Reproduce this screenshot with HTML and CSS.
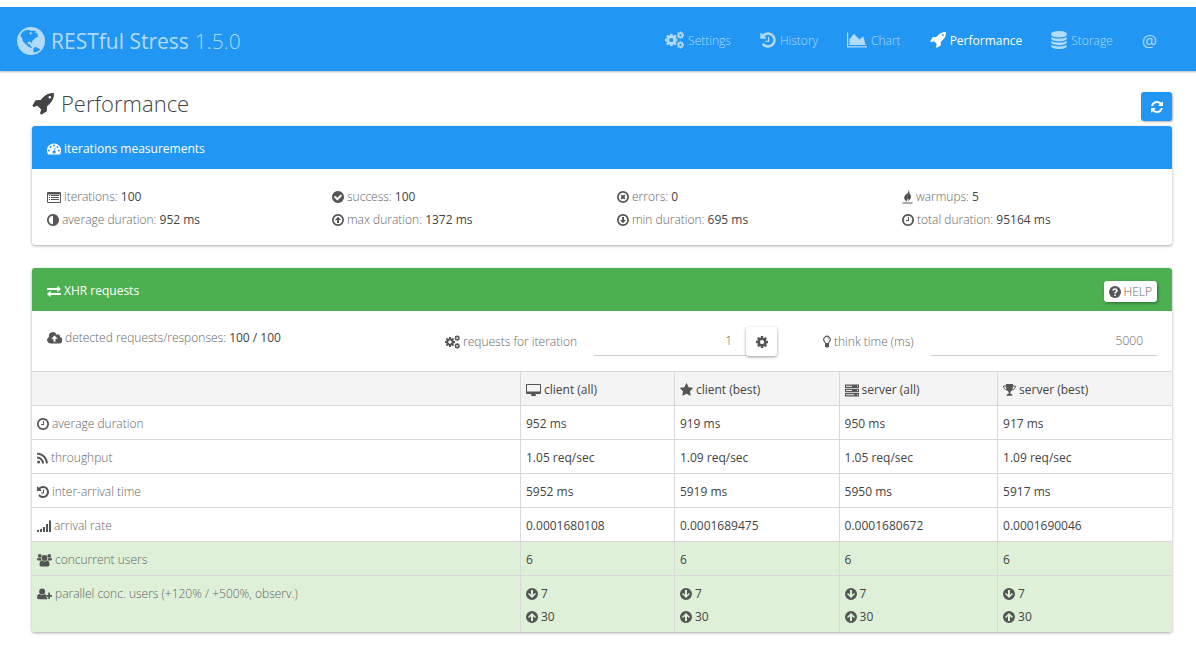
FILE: index.html
```html
<!DOCTYPE html>
<html lang="en">
<head>
<meta charset="utf-8">
<title>RESTful Stress - Performance</title>
<link rel="stylesheet" href="styles.css">
</head>
<body>
<svg class="sprite" aria-hidden="true">
  <symbol id="globe" viewBox="0 0 28 28"><path fill-rule="evenodd" d="M14 0a14 14 0 1 0 0 28a14 14 0 0 0 0-28zM6 4.500L9 3L12.500 3L14.500 4L17 3.500L19.500 4.500L18 5.500L21 7L20.500 8.500L21.500 10L19 10.500L17.500 12L15.500 13.500L15 16L12.500 14.500L10.500 15.500L11 17.500L13 17L13.500 19L15 20L14.500 21L12 20L9 17.500L6 14.500L5 11L3.500 9L4 7zM17 20.500L19 20L23.500 22.500L20.500 24.500L17 25.500L16 23zM12.500 5L14.500 5.500L15 7L13 7.500z"/></symbol>
  <symbol id="cog" viewBox="128 0 1536 1792"><path d="M1152 896q0-106-75-181t-181-75-181 75-75 181 75 181 181 75 181-75 75-181zm512-109v222q0 12-8 23t-20 13l-185 28q-19 54-39 91 35 50 107 138 10 12 10 25t-9 23q-27 37-99 108t-94 71q-12 0-26-9l-138-108q-44 23-91 38-16 136-29 186-7 28-36 28h-222q-14 0-24.5-8.5t-11.500-21.500l-28-184q-49-16-90-37l-141 107q-10 9-25 9-14 0-25-11-126-114-165-168-7-10-7-23 0-12 8-23 15-21 51-66.500t54-70.500q-27-50-41-99l-183-27q-13-2-21-12.500t-8-23.500v-222q0-12 8-23t19-13l186-28q14-46 39-92-40-57-107-138-10-12-10-24 0-10 9-23 26-36 98.500-107.500t94.500-71.500q13 0 26 10l138 107q44-23 91-38 16-136 29-186 7-28 36-28h222q14 0 24.500 8.500t11.500 21.500l28 184q49 16 90 37l142-107q9-9 24-9 13 0 25 10 129 119 165 170 7 8 7 22 0 12-8 23-15 21-51 66.500t-54 70.500q26 50 41 98l183 28q13 2 21 12.500t8 23.500z"/></symbol>
  <symbol id="cogs" viewBox="0 0 1920 1792"><use href="#cog" x="0" y="150" width="1280" height="1493"/><use href="#cog" x="1200" y="-20" width="720" height="840"/><use href="#cog" x="1200" y="970" width="720" height="840"/></symbol>
  <symbol id="history" viewBox="128 0 1536 1792"><path d="M1664 896q0 156-61 298t-164 245-245 164-298 61q-172 0-327-72.500t-264-204.500q-7-10-6.500-22.500t8.500-20.500l137-138q10-9 25-9 16 2 23 12 73 95 179 147t225 52q104 0 198.500-40.500t163.500-109.500 109.500-163.500 40.500-198.500-40.500-198.500-109.500-163.500-163.500-109.500-198.500-40.500q-98 0-188 35.500t-160 101.500l137 138q31 30 14 69-17 40-59 40h-448q-26 0-45-19t-19-45v-448q0-42 40-59 39-17 69 14l130 129q107-101 244.500-156.500t284.500-55.500q156 0 298 61t245 164 164 245 61 298zm-640-288v448q0 14-9 23t-23 9h-320q-14 0-23-9t-9-23v-64q0-14 9-23t23-9h224v-352q0-14 9-23t23-9h64q14 0 23 9t9 23z"/></symbol>
  <symbol id="chart" viewBox="0 0 2048 1792"><path d="M2048 1536v128h-2048v-1536h128v1408h1920zm-384-1024l256 896h-1664v-576l448-576 576 576z"/></symbol>
  <symbol id="rocket" viewBox="0 128 1664 1664"><path d="M1440 448q0-40-28-68t-68-28-68 28-28 68 28 68 68 28 68-28 28-68zm224-288q0 249-75.500 430.500t-253.500 360.500q-81 80-195 176l-20 379q-2 16-16 26l-384 224q-7 4-16 4-12 0-23-9l-64-64q-13-14-8-32l85-276-281-281-276 85q-3 1-9 1-14 0-23-9l-64-64q-17-19-5-39l224-384q10-14 26-16l379-20q96-114 176-195 188-187 358-258t431-71q14 0 24 9.500t10 22.500z"/></symbol>
  <symbol id="database" viewBox="128 0 1536 1792"><path d="M896 768q237 0 443-43t325-127v170q0 69-103 128t-280 93.500-385 34.500-385-34.500-280-93.500-103-128v-170q119 84 325 127t443 43zm0 768q237 0 443-43t325-127v170q0 69-103 128t-280 93.500-385 34.500-385-34.500-280-93.500-103-128v-170q119 84 325 127t443 43zm0-384q237 0 443-43t325-127v170q0 69-103 128t-280 93.500-385 34.500-385-34.500-280-93.500-103-128v-170q119 84 325 127t443 43zm0-1152q208 0 385 34.500t280 93.500 103 128v128q0 69-103 128t-280 93.500-385 34.500-385-34.500-280-93.500-103-128v-128q0-69 103-128t280-93.500 385-34.500z"/></symbol>
  <symbol id="refresh" viewBox="128 0 1536 1792"><path d="M1639 1056q0 5-1 7-64 268-268 434.500t-478 166.500q-146 0-282.500-55t-243.500-157l-129 129q-19 19-45 19t-45-19-19-45v-448q0-26 19-45t45-19h448q26 0 45 19t19 45-19 45l-137 137q71 66 161 102t187 36q134 0 250-65t186-179q11-17 53-117 8-23 30-23h192q13 0 22.500 9.500t9.500 22.500zm25-800v448q0 26-19 45t-45 19h-448q-26 0-45-19t-19-45 19-45l138-138q-148-137-349-137-134 0-250 65t-186 179q-11 17-53 117-8 23-30 23h-199q-13 0-22.500-9.500t-9.500-22.500v-7q65-268 270-434.500t480-166.500q146 0 284 55.500t245 156.500l130-129q19-19 45-19t45 19 19 45z"/></symbol>
  <symbol id="gauge" viewBox="0 0 14 14"><path fill-rule="evenodd" d="M7 1.500A7 7 0 0 0 1 12.200q.2.300.6.300H12.400q.4 0 .6-.3A7 7 0 0 0 7 1.500zM2 7.500a1 1 0 1 1 0 2a1 1 0 0 1 0-2zM3.500 4a1 1 0 1 1 0 2a1 1 0 0 1 0-2zM7 2.500a1 1 0 1 1 0 2a1 1 0 0 1 0-2zM10.500 4a1 1 0 1 1 0 2a1 1 0 0 1 0-2zM12 7.500a1 1 0 1 1 0 2a1 1 0 0 1 0-2zM8 5.200L8.700 5.400L7.900 8.600A1.600 1.600 0 1 1 7.100 8.400z"/></symbol>
  <symbol id="list" viewBox="0 0 14 14"><path fill-rule="evenodd" d="M1.200 2H12.800Q14 2 14 3.200V11.800Q14 13 12.800 13H1.200Q0 13 0 11.800V3.200Q0 2 1.200 2zM1 4.500V11.700Q1 12 1.300 12H12.700Q13 12 13 11.700V4.500z"/><path d="M2 5H3V6H2zM4 5H12V6H4zM2 7H3V8H2zM4 7H12V8H4zM2 9H3V10H2zM4 9H12V10H4z"/></symbol>
  <symbol id="adjust" viewBox="128 0 1536 1792"><path d="M896 1440v-1088q-148 0-273 73t-198 198-73 273 73 273 198 198 273 73zm768-544q0 209-103 385.500t-279.500 279.500-385.500 103-385.500-103-279.500-279.500-103-385.500 103-385.500 279.500-279.500 385.500-103 385.500 103 279.500 279.500 103 385.500z"/></symbol>
  <symbol id="check" viewBox="128 0 1536 1792"><path d="M1412 734q0-28-18-46l-91-90q-19-19-45-19t-45 19l-408 407-226-226q-19-19-45-19t-45 19l-91 90q-18 18-18 46 0 27 18 45l362 362q19 19 45 19 27 0 46-19l543-543q18-18 18-45zm252 162q0 209-103 385.500t-279.500 279.500-385.500 103-385.500-103-279.500-279.500-103-385.500 103-385.500 279.500-279.500 385.500-103 385.500 103 279.500 279.500 103 385.500z"/></symbol>
  <symbol id="clock" viewBox="128 0 1536 1792"><path d="M1024 544v448q0 14-9 23t-23 9h-320q-14 0-23-9t-9-23v-64q0-14 9-23t23-9h224v-352q0-14 9-23t23-9h64q14 0 23 9t9 23zm416 352q0-148-73-273t-198-198-273-73-273 73-198 198-73 273 73 273 198 198 273 73 273-73 198-198 73-273zm224 0q0 209-103 385.500t-279.500 279.500-385.500 103-385.500-103-279.500-279.500-103-385.500 103-385.500 279.500-279.500 385.500-103 385.500 103 279.500 279.500 103 385.500z"/></symbol>
  <symbol id="up-o" viewBox="0 0 12 14"><circle cx="6" cy="7" r="5.150" fill="none" stroke="currentColor" stroke-width="1.700"/><path d="M6 3.800L9 7H7V10H5V7H3z"/></symbol>
  <symbol id="down-o" viewBox="0 0 12 14"><circle cx="6" cy="7" r="5.150" fill="none" stroke="currentColor" stroke-width="1.700"/><path d="M6 10.200L9 7H7V4H5V7H3z"/></symbol>
  <symbol id="times-o" viewBox="0 0 12 14"><circle cx="6" cy="7" r="5.150" fill="none" stroke="currentColor" stroke-width="1.700"/><path d="M4.200 5.200L7.800 8.800M7.800 5.200L4.200 8.800" stroke="currentColor" stroke-width="1.900"/></symbol>
  <symbol id="fire" viewBox="0 0 10 14"><path d="M0 12.500H10V13.500H0zM6 0C7.500 2.500 6.500 3 7.500 4C9.500 6.500 8.500 9 5.500 11.500C6.300 10 6 9 5.500 8.500C5 9.500 4.200 10 4.600 11.500C1.500 10 1 7.500 2.500 5.500C4 4 6 3.500 6 0z"/></symbol>
  <symbol id="exchange" viewBox="0 0 14 14"><path d="M0 4H10.500V1.700L14 5L10.500 8.200V6H0zM14 9H3.500V6.800L0 10L3.500 13.200V11H14z"/></symbol>
  <symbol id="help" viewBox="0 0 12 14"><circle cx="6" cy="7" r="6"/><path class="cut" d="M4 5.700Q4.200 4 6 4T8 5.600Q8 6.500 7 7T6 8.500M6 9.500V11" stroke-width="1.600"/></symbol>
  <symbol id="cloud" viewBox="0 0 15 14"><path fill-rule="evenodd" d="M3.500 12.500A3.500 3.500 0 0 1 2 5.900A4 4 0 0 1 9.700 3.800A2 2 0 0 1 12.900 6A3.300 3.300 0 0 1 12 12.500zM7.500 4.500L4.200 7.700H6.500V10.700H8.500V7.700H10.800z"/></symbol>
  <symbol id="bulb" viewBox="0 0 8 14"><path d="M2.500 8.500Q2.300 7.500 1.500 6.500A3.200 3.200 0 1 1 6.500 6.500Q5.700 7.500 5.500 8.500z" fill="none" stroke="currentColor" stroke-width="1.100"/><path d="M2 9H6V12H5L4 13L3 12H2zM4 2.500Q5.700 2.700 5.800 4.300H5.200Q5 3.200 4 3.100z"/></symbol>
  <symbol id="desktop" viewBox="0 0 15 14"><path fill-rule="evenodd" d="M1 1H14Q15 1 15 2V10Q15 11 14 11H9.300L10 12.500V13H5V12.500L5.700 11H1Q0 11 0 10V2Q0 1 1 1zM1 2V8.500H14V2z"/></symbol>
  <symbol id="star" viewBox="64 0 1664 1792"><path d="M1728 647q0 22-26 48l-363 354 86 500q1 7 1 20 0 21-10.500 35.500t-30.500 14.500q-19 0-40-12l-449-236-449 236q-22 12-40 12-21 0-31.500-14.500t-10.500-35.500q0-6 2-20l86-500-364-354q-25-27-25-48 0-37 56-46l502-73 225-455q19-41 49-41t49 41l225 455 502 73q56 9 56 46z"/></symbol>
  <symbol id="server" viewBox="0 0 14 14"><path fill-rule="evenodd" d="M0 1.500H14V5H0zM0 5.700H14V9.200H0zM0 10H14V13.500H0zM1 2.700V3.800H7V2.700zM12 2.700V3.800H13V2.700zM1 6.900V8H7V6.900zM12 6.900V8H13V6.900zM1 11.200V12.300H9V11.200zM12 11.200V12.300H13V11.200z"/></symbol>
  <symbol id="trophy" viewBox="0 0 13 14"><path d="M3 1H10V4Q10 7 7.300 9V10.500Q9.500 11 9.500 12.800H3.500Q3.500 11 5.700 10.500V9Q3 7 3 4z"/><path d="M3.500 3H.6Q.5 6.500 4.500 7M9.500 3H12.400Q12.500 6.500 8.500 7" fill="none" stroke="currentColor"/></symbol>
  <symbol id="rss" viewBox="0 0 11 14"><circle cx="1.600" cy="11" r="1.500"/><path d="M0 6.500A6 6 0 0 1 6 12.500M0 2.600A10 10 0 0 1 9.900 12.500" fill="none" stroke="currentColor" stroke-width="1.900"/></symbol>
  <symbol id="signal" viewBox="0 0 14 14"><path d="M0 11H2V13H0zM3 10H5V13H3zM6 8H8V13H6zM9 5H11V13H9zM12 1.500H14V13H12z"/></symbol>
  <symbol id="users" viewBox="0 0 15 14"><circle cx="7.500" cy="5" r="2.900"/><circle cx="2.800" cy="2.800" r="1.900"/><circle cx="12.200" cy="2.800" r="1.900"/><path d="M4.800 7.500Q7.500 9.500 10.200 7.500Q12.500 8 12.500 11.500Q12.500 13.500 11 13.500H4Q2.500 13.500 2.500 11.500Q2.500 8 4.800 7.500zM1 4.700Q2.500 5.500 4 5Q4 6.500 4.500 7.500H1.500Q0 7.500 0 6Q0 5 1 4.700zM14 4.700Q12.500 5.500 11 5Q11 6.500 10.500 7.500H13.500Q15 7.500 15 6Q15 5 14 4.700z"/></symbol>
  <symbol id="user-plus" viewBox="0 0 16 14"><circle cx="5.500" cy="4.300" r="3.200"/><path d="M2.800 7Q5.500 9 8.200 7Q9 7.200 9.500 8V10.500H11V12.700H2Q0 12.700 0 10.500Q0 7.300 2.800 7zM12 5.500H13.800V8H16V9.800H13.800V12.300H12V9.800H9.800V8H12z"/></symbol>
  <symbol id="up" viewBox="0 0 12 14"><path fill-rule="evenodd" d="M6 1a6 6 0 1 0 0 12a6 6 0 0 0 0-12zM6 3L10 7L9 8L7 6.300V11H5V6.300L3 8L2 7z"/></symbol>
  <symbol id="down" viewBox="0 0 12 14"><path fill-rule="evenodd" d="M6 1a6 6 0 1 0 0 12a6 6 0 0 0 0-12zM6 11L10 7L9 6L7 7.700V3H5V7.700L3 6L2 7z"/></symbol>
</svg>

<header class="navbar">
  <a class="brand" href="#"><svg class="icon logo"><use href="#globe"/></svg><strong>RESTful Stress</strong><span>1.5.0</span></a>
  <nav class="menu">
    <a href="#"><svg class="icon n19"><use href="#cogs"/></svg>Settings</a>
    <a href="#"><svg class="icon n16"><use href="#history"/></svg>History</a>
    <a href="#"><svg class="icon n20"><use href="#chart"/></svg>Chart</a>
    <a href="#" class="active" aria-current="page"><svg class="icon n16"><use href="#rocket"/></svg>Performance</a>
    <a href="#"><svg class="icon n16"><use href="#database"/></svg>Storage</a>
    <a href="#" class="at">@</a>
  </nav>
</header>

<main class="page">
  <div class="title-row">
    <h1><svg class="icon title-icon"><use href="#rocket"/></svg>Performance</h1>
    <button class="refresh" type="button" aria-label="Refresh"><svg class="icon w12"><use href="#refresh"/></svg></button>
  </div>

  <section class="card">
    <h2 class="card-head blue"><svg class="icon w14"><use href="#gauge"/></svg>iterations measurements</h2>
    <div class="stats">
      <div><svg class="icon w14"><use href="#list"/></svg>iterations: <b>100</b></div>
      <div><svg class="icon w12"><use href="#check"/></svg>success: <b>100</b></div>
      <div><svg class="icon w12"><use href="#times-o"/></svg>errors: <b>0</b></div>
      <div><svg class="icon w11"><use href="#fire"/></svg>warmups: <b>5</b></div>
      <div><svg class="icon w12"><use href="#adjust"/></svg>average duration: <b>952 ms</b></div>
      <div><svg class="icon w12"><use href="#up-o"/></svg>max duration: <b>1372 ms</b></div>
      <div><svg class="icon w12"><use href="#down-o"/></svg>min duration: <b>695 ms</b></div>
      <div><svg class="icon w12"><use href="#clock"/></svg>total duration: <b>95164 ms</b></div>
    </div>
  </section>

  <section class="card">
    <div class="card-head green">
      <h2><svg class="icon w14"><use href="#exchange"/></svg>XHR requests</h2>
      <button class="help" type="button"><svg class="icon w12"><use href="#help"/></svg>HELP</button>
    </div>
    <form class="params">
      <div class="detected"><svg class="icon w15"><use href="#cloud"/></svg>detected requests/responses: <b>100 / 100</b></div>
      <div class="field">
        <label for="requests"><svg class="icon w15"><use href="#cogs"/></svg>requests for iteration</label>
        <input id="requests" type="text" value="1">
        <button class="tune" type="button" aria-label="Set requests"><svg class="icon w12"><use href="#cog"/></svg></button>
      </div>
      <div class="field">
        <label for="think"><svg class="icon w8"><use href="#bulb"/></svg>think time (ms)</label>
        <input id="think" type="text" value="5000">
      </div>
    </form>
    <table>
      <colgroup><col class="c-name"><col class="c-ca"><col class="c-cb"><col class="c-sa"><col class="c-sb"></colgroup>
      <thead>
        <tr><td></td><th scope="col"><svg class="icon w15"><use href="#desktop"/></svg>client (all)</th><th scope="col"><svg class="icon w13"><use href="#star"/></svg>client (best)</th><th scope="col"><svg class="icon w14"><use href="#server"/></svg>server (all)</th><th scope="col"><svg class="icon w13"><use href="#trophy"/></svg>server (best)</th></tr>
      </thead>
      <tbody>
        <tr><th scope="row"><svg class="icon w12"><use href="#clock"/></svg>average duration</th><td>952 ms</td><td>919 ms</td><td>950 ms</td><td>917 ms</td></tr>
        <tr><th scope="row"><svg class="icon w11"><use href="#rss"/></svg>throughput</th><td>1.05 req/sec</td><td>1.09 req/sec</td><td>1.05 req/sec</td><td>1.09 req/sec</td></tr>
        <tr><th scope="row"><svg class="icon w12"><use href="#history"/></svg>inter-arrival time</th><td>5952 ms</td><td>5919 ms</td><td>5950 ms</td><td>5917 ms</td></tr>
        <tr><th scope="row"><svg class="icon w14"><use href="#signal"/></svg>arrival rate</th><td>0.0001680108</td><td>0.0001689475</td><td>0.0001680672</td><td>0.0001690046</td></tr>
        <tr class="hit"><th scope="row"><svg class="icon w15"><use href="#users"/></svg>concurrent users</th><td>6</td><td>6</td><td>6</td><td>6</td></tr>
        <tr class="hit"><th scope="row"><svg class="icon w15"><use href="#user-plus"/></svg>parallel conc. users <small>(+120% / +500%, observ.)</small></th>
          <td><svg class="icon w12"><use href="#down"/></svg>7<br><svg class="icon w12"><use href="#up"/></svg>30</td>
          <td><svg class="icon w12"><use href="#down"/></svg>7<br><svg class="icon w12"><use href="#up"/></svg>30</td>
          <td><svg class="icon w12"><use href="#down"/></svg>7<br><svg class="icon w12"><use href="#up"/></svg>30</td>
          <td><svg class="icon w12"><use href="#down"/></svg>7<br><svg class="icon w12"><use href="#up"/></svg>30</td></tr>
      </tbody>
    </table>
  </section>
</main>
</body>
</html>
```
FILE: styles.css
```css
* { box-sizing: border-box; }

body {
  margin: 0;
  padding-top: 7px;
  background: #fff;
  color: #666;
  font: 300 12px/23px "Open Sans", "Noto Sans", sans-serif;
}

h1, h2 { margin: 0; font-weight: 300; }
b { font-weight: 400; color: #444; }
a { text-decoration: none; color: inherit; }
button, input { font: inherit; color: inherit; }
.sprite { display: none; }

.icon {
  height: 14px;
  margin-right: 3px;
  vertical-align: -3px;
  fill: currentColor;
  color: #555;
  flex: none;
}
.w8 { width: 8px; }
.w11 { width: 11px; }
.w12 { width: 12px; }
.w13 { width: 13px; }
.w14 { width: 14px; }
.w15 { width: 15px; }
.cut { fill: none; stroke: #fff; }

.navbar {
  display: flex;
  justify-content: space-between;
  align-items: center;
  height: 64px;
  padding: 0 39px 0 17px;
  background: #2196f3;
  color: #b2dbfb;
  box-shadow: 0 1px 2px rgba(0, 0, 0, .3);
}
.navbar .icon { color: inherit; }
.brand { display: flex; align-items: center; font-size: 21px; line-height: 32px; padding-top: 4px; }
.brand strong { font-weight: 400; margin-right: 6px; }
.navbar .logo { width: 28px; height: 28px; margin-right: 6px; }
.menu { display: flex; gap: 29px; padding-top: 2px; }
.menu a { display: flex; align-items: center; }
.menu .icon { margin-right: 4px; }
.menu .active { color: #fff; font-weight: 400; }
.menu .at { font-size: 17px; font-weight: 400; }
.n16, .n19, .n20 { height: 18px; }
.n16 { width: 16px; }
.n19 { width: 19px; }
.n20 { width: 20px; }

.page { padding: 19px 24px 16px 32px; }
.title-row { display: flex; justify-content: space-between; align-items: flex-end; height: 36px; }
h1 { font-size: 22px; line-height: 46px; color: #444; }
.title-icon { width: 22px; height: 22px; margin-right: 7px; vertical-align: -3px; color: #444; }
.refresh {
  width: 31px;
  height: 29px;
  margin-bottom: 5px;
  padding: 0;
  border: 0;
  border-radius: 3px;
  background: #2196f3;
  box-shadow: 1px 1px 2px rgba(0, 0, 0, .3);
}
.refresh .icon { margin: 0; color: #fff; }

.card {
  margin-bottom: 23px;
  border-radius: 3px;
  background: #fff;
  box-shadow: 0 1px 3px rgba(0, 0, 0, .35);
  overflow: hidden;
}
.card-head { padding: 11px 15px 9px; color: #fff; font-size: 12px; line-height: 23px; font-weight: 400; }
.card-head h2 { font-size: 12px; font-weight: 400; }
.card-head h2 .icon, h2.card-head .icon { color: #fff; }
.blue { background: #2196f3; }
.green { display: flex; justify-content: space-between; background: #4caf50; }
.help {
  height: 21px;
  margin-top: 2px;
  padding: 0 5px;
  border: 0;
  border-radius: 3px;
  background: #fff;
  color: #666;
  line-height: 21px;
  font-weight: 300;
  box-shadow: 1px 1px 3px rgba(0, 0, 0, .4);
}

.stats { display: grid; grid-template-columns: repeat(4, 1fr); padding: 16px 0 14px; }
.stats div { padding-left: 15px; }

.params {
  display: grid;
  grid-template-columns: 352fr 332fr 334fr;
  gap: 46px;
  padding: 15px;
}
.params > * { min-width: 0; }
.detected { white-space: nowrap; }
.field { display: flex; height: 30px; align-items: center; }
.field label { margin-right: 17px; white-space: nowrap; }
.field input {
  flex: 1;
  min-width: 0;
  height: 30px;
  padding: 0 14px;
  border: 0;
  border-bottom: 1px solid #ccc;
  background: none;
  text-align: right;
}
.tune {
  width: 31px;
  height: 29px;
  padding: 0;
  border: 0;
  border-radius: 3px;
  background: #fff;
  box-shadow: 0 1px 3px rgba(0, 0, 0, .4);
}
.tune .icon { margin: 0; }

table { width: 100%; border-collapse: collapse; table-layout: fixed; }
.c-name { width: 42.850%; }
.c-ca { width: 13.500%; }
.c-cb { width: 14.450%; }
.c-sa { width: 13.900%; }
.c-sb { width: 15.300%; }
th, td {
  padding: 6px 5px 4px;
  border-top: 1px solid #d9d9d9;
  border-left: 1px solid #d9d9d9;
  text-align: left;
  vertical-align: top;
  font-weight: 400;
  color: #444;
}
tr > :first-child { border-left: 0; }
tbody th { font-weight: 300; color: #666; }
thead { background: #f4f4f4; }
.hit { background: #dff0d8; }
small { font-size: 12px; }
```
